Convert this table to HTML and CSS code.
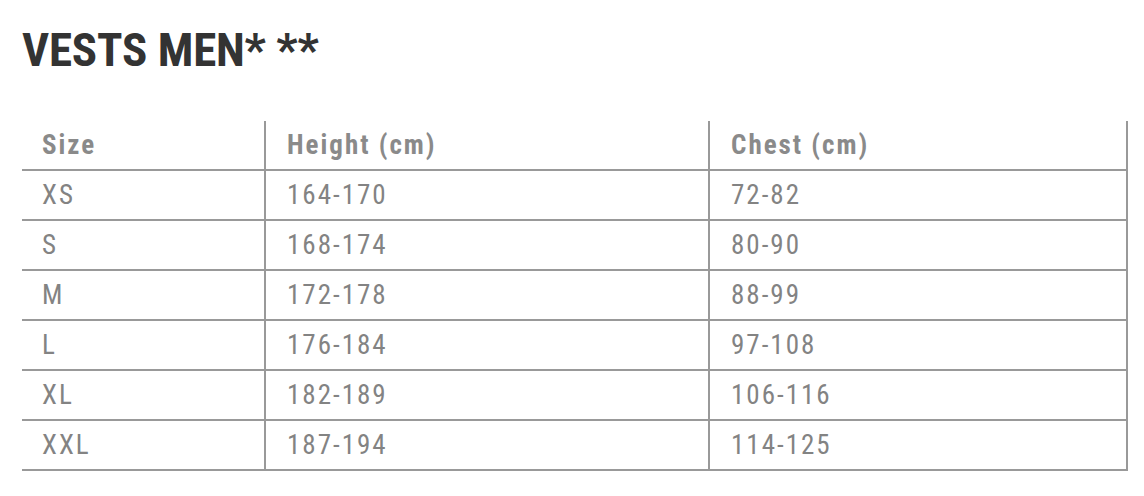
FILE: index.html
```html
<!DOCTYPE html>
<html>
<head>
<meta charset="utf-8">
<link rel="stylesheet" href="styles.css">
</head>
<body>
<div class="page">
  <h1 class="title">VESTS MEN* **</h1>
  <table class="sizes">
    <colgroup>
      <col class="c1"><col class="c2"><col class="c3">
    </colgroup>
    <thead>
      <tr><th>Size</th><th>Height (cm)</th><th>Chest (cm)</th></tr>
    </thead>
    <tbody>
      <tr><td>XS</td><td>164-170</td><td>72-82</td></tr>
      <tr><td>S</td><td>168-174</td><td>80-90</td></tr>
      <tr><td>M</td><td>172-178</td><td>88-99</td></tr>
      <tr><td>L</td><td>176-184</td><td>97-108</td></tr>
      <tr><td>XL</td><td>182-189</td><td>106-116</td></tr>
      <tr><td>XXL</td><td>187-194</td><td>114-125</td></tr>
    </tbody>
  </table>
</div>
</body>
</html>
```
FILE: styles.css
```css
html, body {
  margin: 0;
  padding: 0;
  background: #fff;
}
.page {
  padding: 24px 19px 0 22px;
  font-family: "Roboto Condensed", "Roboto", sans-serif;
}
.title {
  margin: 0;
  font-size: 47px;
  line-height: 52px;
  font-weight: bold;
  color: #333;
  letter-spacing: -0.2px;
}
.sizes {
  margin-top: 45px;
  border-collapse: collapse;
  width: 1105px;
  table-layout: fixed;
}
.c1 { width: 243px; }
.c2 { width: 444px; }
.c3 { width: 418px; }
.sizes th, .sizes td {
  text-align: left;
  height: 48px;
  padding: 0 0 0 20px;
  font-size: 27px;
  color: #888;
  border-bottom: 2px solid #999;
  border-right: 2px solid #999;
  letter-spacing: 2px;
}
.sizes th {
  font-weight: bold;
  color: #8a8a8a;
}
.sizes td {
  color: #838383;
}
.sizes th:nth-child(n+2), .sizes td:nth-child(n+2) {
  padding-left: 21px;
}
```
